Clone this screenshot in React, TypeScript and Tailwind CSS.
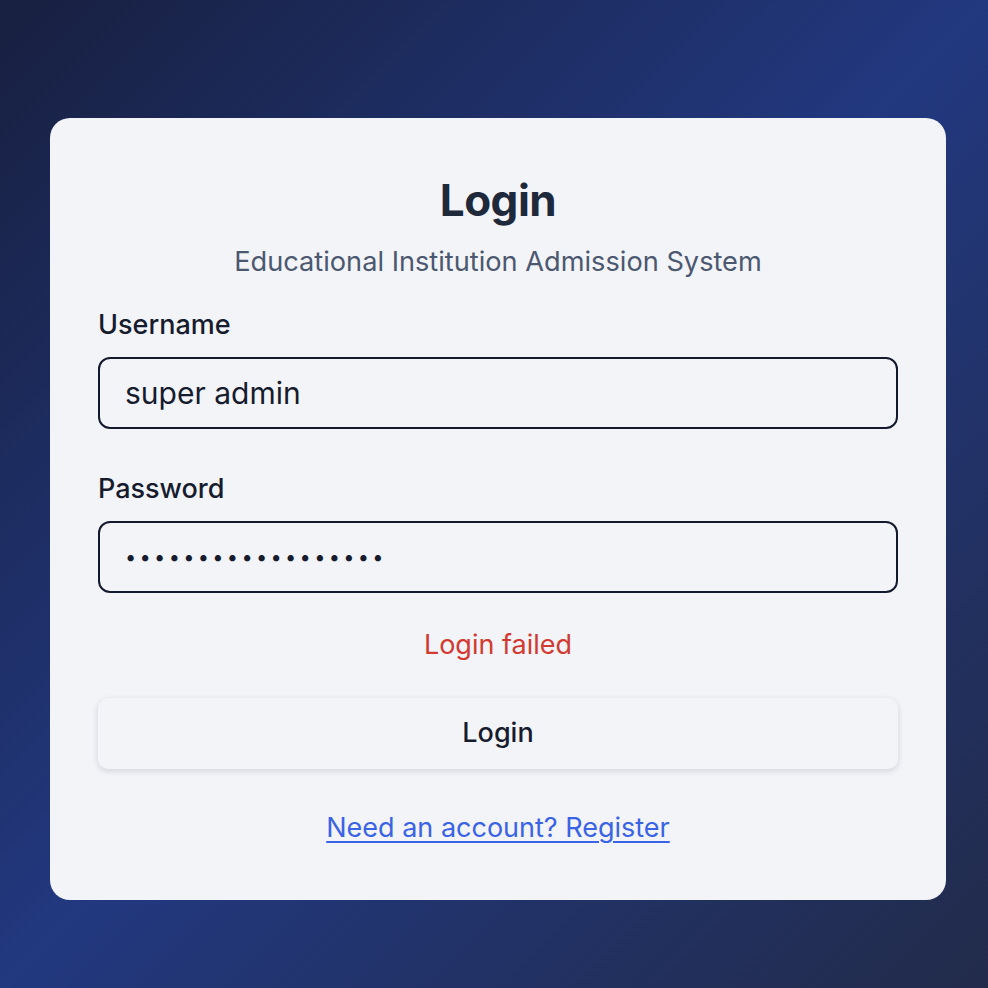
export default function App() {
    return (
        <div
            className="min-h-[988px] w-full bg-[linear-gradient(135deg,#182040_0%,#22387f_50%,#222b4a_100%)] pt-[118px] pl-[50px]"
            style={{ fontFamily: 'Inter, "Noto Sans", sans-serif' }}
        >
            <div className="w-[896px] h-[782px] rounded-[20px] bg-[#f3f4f8] px-[48px] pt-[50px] flex flex-col">
                {/* Header */}
                <h1 className="text-center text-[44px] leading-[64px] font-bold text-[#1e293b] tracking-[-0.5px]">Login</h1>
                <p className="mt-[14px] text-center text-[27.2px] leading-[32px] text-[#4b5870]">
                    Educational Institution Admission System
                </p>

                {/* Username */}
                <label className="mt-[31px] text-[27px] leading-[32px] font-medium text-[#161b2e]">Username</label>
                <input
                    readOnly
                    value="super admin"
                    className="mt-[16px] h-[72px] w-full rounded-[12px] border-2 border-[#141a2e] bg-[#f3f4f8] px-[25px] text-[30px] text-[#161b2e] outline-none"
                />

                {/* Password */}
                <label className="mt-[44px] text-[27px] leading-[32px] font-medium text-[#161b2e]">Password</label>
                <input
                    readOnly
                    type="password"
                    value="ssssssssssssssssss"
                    className="mt-[16px] h-[72px] w-full rounded-[12px] border-2 border-[#141a2e] bg-[#f3f4f8] px-[25px] text-[20px] tracking-[3.3px] text-[#161b2e] outline-none"
                />

                {/* Error */}
                <p className="mt-[36px] text-center text-[27px] leading-[32px] text-[#d23a31]">Login failed</p>

                {/* Submit */}
                <button className="mt-[37px] h-[71px] w-full rounded-[10px] bg-[#f3f4f8] shadow-[0_2px_6px_rgba(15,23,42,0.15)] text-[27px] font-medium text-[#161b2e]">
                    Login
                </button>

                <a href="#" className="mt-[43px] self-center text-[27px] leading-[32px] text-[#3a63e6] underline underline-offset-[4px]">
                    Need an account? Register
                </a>
            </div>
        </div>
    )
}
